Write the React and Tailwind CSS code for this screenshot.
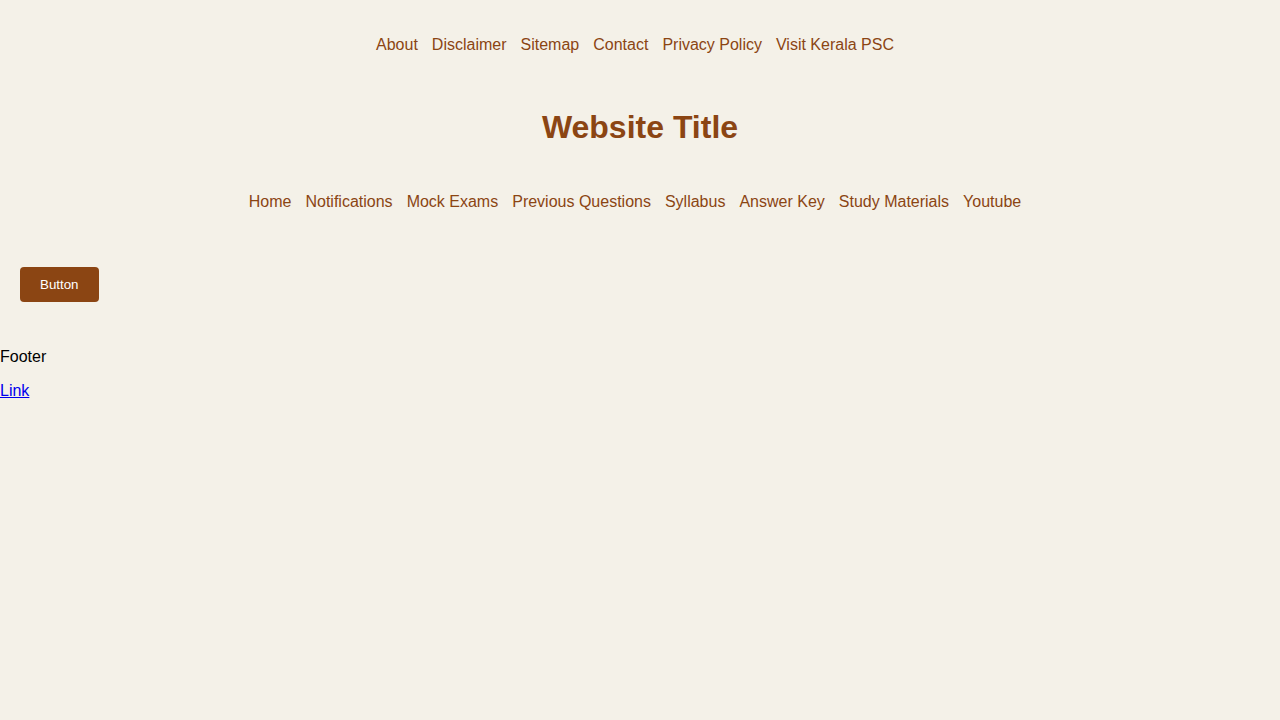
export default function App() {
  const top = ["About", "Disclaimer", "Sitemap", "Contact", "Privacy Policy", "Visit Kerala PSC"];
  const main = ["Home", "Notifications", "Mock Exams", "Previous Questions", "Syllabus", "Answer Key", "Study Materials", "Youtube"];
  return (
    <div className="min-h-[720px] bg-[#f4f1e8] font-['Liberation_Sans',Arial,sans-serif] text-black">
      <nav className="flex justify-center gap-[14px] pr-[10px] pt-[33px] text-[16px] leading-6 text-[#8b4513]">
        {top.map((t) => (
          <a key={t} href="#" className="text-[#8b4513]">{t}</a>
        ))}
      </nav>
      <h1 className="mt-[51px] text-center text-[32px] font-bold leading-[38px] text-[#8b4513]">Website Title</h1>
      <nav className="mt-[44px] flex justify-center gap-[14px] pr-[10px] text-[16px] leading-6 text-[#8b4513]">
        {main.map((t) => (
          <a key={t} href="#" className="text-[#8b4513]">{t}</a>
        ))}
      </nav>
      <div className="mt-[53px] px-[20px]">
        <button className="rounded-[4px] bg-[#8b4513] px-[20px] py-[10px] text-[13.33px] leading-[15px] text-white">Button</button>
      </div>
      <footer className="mt-[46px] text-[16px]">
        <p className="leading-[18px]">Footer</p>
        <p className="mt-[16px] leading-[18px]">
          <a href="#" className="text-[#0000ee] underline">Link</a>
        </p>
      </footer>
    </div>
  );
}
